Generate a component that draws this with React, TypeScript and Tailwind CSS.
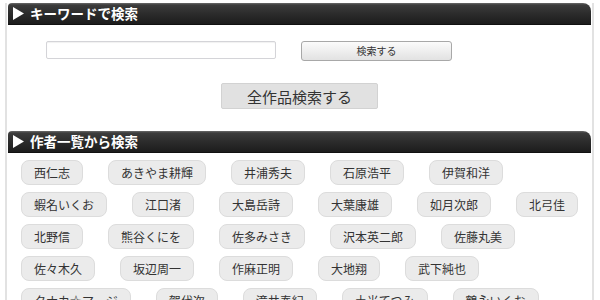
import React from "react";

const font = { fontFamily: '"Noto Sans CJK JP", "Noto Sans", sans-serif' };

function Header({ title, className = "" }: { title: string; className?: string }) {
  return (
    <div
      className={`flex items-center h-[22px] rounded-tl-[4px] rounded-tr-[8px] border-b border-[#111] bg-[linear-gradient(to_bottom,#6a6a6a_0px,#3c3c3c_2px,#2c2c2c_50%,#1c1c1c_100%)] ${className}`}
    >
      <svg width="11" height="13" viewBox="0 0 11 13" className="ml-[5px] mr-[6px]">
        <polygon points="0,0 11,6.5 0,13" fill="#ffffff" />
      </svg>
      <span className="text-white font-bold text-[13.5px] leading-none tracking-[0px]">{title}</span>
    </div>
  );
}

const authors = [
  "西仁志",
  "あきやま耕輝",
  "井浦秀夫",
  "石原浩平",
  "伊賀和洋",
  "蝦名いくお",
  "江口渚",
  "大島岳詩",
  "大葉康雄",
  "如月次郎",
  "北弓佳",
  "北野信",
  "熊谷くにを",
  "佐多みさき",
  "沢本英二郎",
  "佐藤丸美",
  "佐々木久",
  "坂辺周一",
  "作麻正明",
  "大地翔",
  "武下純也",
  "タナカ☆マージ",
  "賀代次",
  "滝井春紀",
  "土光てつみ",
  "鶴永いくお",
];

export default function App() {
  return (
    <div className="w-[600px] h-[300px] overflow-hidden bg-white" style={font}>
      <div className="ml-[5px] w-[589px] min-h-[300px] border-x-2 border-[#e2e2e2] px-px">
        <Header title="キーワードで検索" className="mt-[3px]" />
        <div className="h-[106px] flex flex-col">
          <div className="flex items-start mt-[16px] ml-[38px]">
            <div className="w-[230px] h-[18px] border border-[#d4d4d8] rounded-[2px] bg-white shadow-[inset_0_1px_1px_rgba(0,0,0,0.06)]" />
            <button className="ml-[25px] w-[151px] h-[20px] border border-[#a8a8a8] rounded-[3px] bg-[linear-gradient(to_bottom,#fbfbfb,#e2e2e2)] text-[10px] leading-none text-[#333] flex items-center justify-center">
              検索する
            </button>
          </div>
          <div className="flex justify-center mt-[22px]">
            <button className="w-[157px] h-[26px] border border-[#d2d2d2] rounded-[2px] bg-[#e1e1e1] text-[15px] leading-none text-[#333] flex items-center justify-center">
              全作品検索する
            </button>
          </div>
        </div>
        <Header title="作者一覧から検索" />
        <div className="flex flex-wrap gap-x-[25px] gap-y-[7px] pl-[13px] pr-[8px] pt-[7px]">
          {authors.map((a) => (
            <div
              key={a}
              className="h-[25px] px-[12px] border border-[#dcdcdc] rounded-[8px] bg-[#ebebeb] text-[12px] leading-[23px] text-[#333] whitespace-nowrap"
            >
              {a}
            </div>
          ))}
        </div>
      </div>
    </div>
  );
}
